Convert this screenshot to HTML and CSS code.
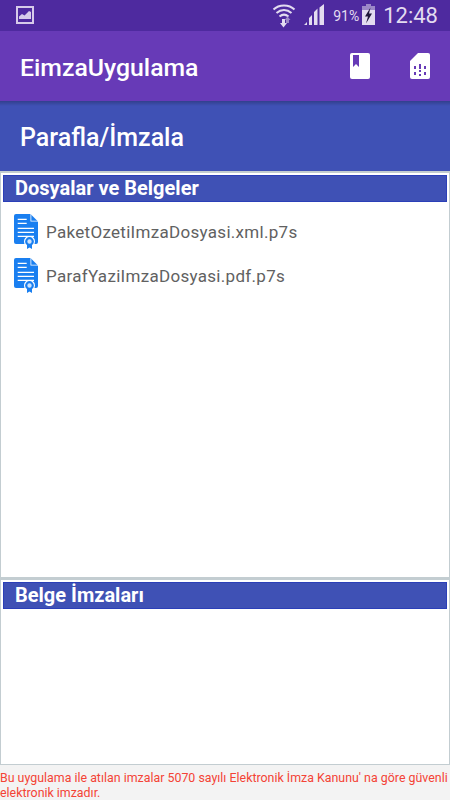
FILE: index.html
```html
<!DOCTYPE html>
<html lang="tr">
<head>
<meta charset="utf-8">
<title>EimzaUygulama</title>
<link rel="stylesheet" href="styles.css">
</head>
<body>
<div class="app">
  <div class="statusbar">
    <svg class="st-pic" width="18" height="18" viewBox="0 0 18 18"><path fill="#d6cbea" d="M0 0h18v18H0z"/><path fill="#4e2a9f" d="M2 2h14v14H2z"/><path fill="#d6cbea" d="M3 13v-2.500l3-2.500 2.500 1.500L13 5l2 1v7z"/></svg>
    <div class="st-right">
      <svg class="st-wifi" width="24" height="26" viewBox="0 0 24 26"><g fill="none" stroke="#e3dcf0" stroke-width="2"><path d="M1.500 7.500C7 2 17 2 22.500 7.500"/><path d="M4.500 11C9 7 15 7 19.500 11"/><path d="M7.500 14.500c3-2.500 6-2.500 9 0"/></g><path fill="#e3dcf0" d="M10 17h3v4h2l-3.500 4.500L8 21h2z"/><path fill="#9c88c8" d="M14 21v-3h-1.500l3-3.500 3 3.500H17v3z"/></svg>
      <svg class="st-signal" width="20" height="21" viewBox="0 0 20 21"><path fill="#e3dcf0" d="M0 21l3-3v3zM5 21v-7l3-3v10zM10 21V8l3.500-3.500V21zM15.500 21V3.500L20 0v21z"/></svg>
      <span class="st-pct">91%</span>
      <svg class="st-batt" width="13" height="21" viewBox="0 0 13 21"><path fill="#9c88c8" d="M4 0h5v2H4zM0 2h13v4H0z"/><path fill="#e3dcf0" d="M0 6h13v15H0z"/><path fill="#20183a" d="M8.500 3.500L3 12.500h3l-2 7 6-10H7z"/></svg>
      <span class="st-time">12:48</span>
    </div>
  </div>
  <div class="toolbar">
    <span class="tb-title">EimzaUygulama</span>
    <div class="tb-actions">
      <svg width="20" height="26" viewBox="0 0 20 26"><path fill="#fff" d="M2 0h16a2 2 0 0 1 2 2v22a2 2 0 0 1-2 2H2a2 2 0 0 1-2-2V2a2 2 0 0 1 2-2z"/><path fill="#673ab7" d="M3 2h6v12l-3-3-3 3z"/></svg>
      <svg width="20" height="26" viewBox="0 0 20 26"><path fill="#fff" d="M8 0h10a2 2 0 0 1 2 2v22a2 2 0 0 1-2 2H2a2 2 0 0 1-2-2V8z"/><path fill="#673ab7" d="M4 13h2v3H4zM9 13h2v3H9zM14 13h2v3h-2zM4 19h2v3H4zM9 11h2v2H9zM9 17h2v2H9zM9 21h2v2H9zM14 19h2v3h-2z"/></svg>
    </div>
  </div>
  <div class="pagehead">
    <div class="shadow"></div>
    <span class="pagehead-title">Parafla/İmzala</span>
  </div>
  <main class="content">
    <section class="panel panel-files">
      <h2 class="panel-bar">Dosyalar ve Belgeler</h2>
      <ul class="files">
        <li class="file">
          <svg class="file-icon" width="24" height="35" viewBox="0 0 24 35"><path fill="#1a7ff0" d="M2 0h14.500L24 7.500V28a2 2 0 0 1-2 2H2a2 2 0 0 1-2-2V2a2 2 0 0 1 2-2z"/><path fill="#fff" d="M16.500 0l.8 0v6.700H24v.8h-7.500zM3.700 4.800h9v1.200h-9zM3.700 8.800h9V10h-9zM3.700 13.800H20V15H3.700zM3.700 17.800H20V19H3.700zM3.700 21.800H20V23H3.700z"/><circle cx="15.500" cy="27.500" r="5.500" fill="#fff"/><circle cx="15.500" cy="27.500" r="3.300" fill="#cfe4fd" stroke="#1a7ff0" stroke-width="2.200"/><path fill="#1a7ff0" d="M13 31h5v4l-2.500-1.500L13 35z"/></svg>
          <span class="file-name">PaketOzetiImzaDosyasi.xml.p7s</span>
        </li>
        <li class="file">
          <svg class="file-icon" width="24" height="35" viewBox="0 0 24 35"><path fill="#1a7ff0" d="M2 0h14.500L24 7.500V28a2 2 0 0 1-2 2H2a2 2 0 0 1-2-2V2a2 2 0 0 1 2-2z"/><path fill="#fff" d="M16.500 0l.8 0v6.700H24v.8h-7.500zM3.700 4.800h9v1.200h-9zM3.700 8.800h9V10h-9zM3.700 13.800H20V15H3.700zM3.700 17.800H20V19H3.700zM3.700 21.800H20V23H3.700z"/><circle cx="15.500" cy="27.500" r="5.500" fill="#fff"/><circle cx="15.500" cy="27.500" r="3.300" fill="#cfe4fd" stroke="#1a7ff0" stroke-width="2.200"/><path fill="#1a7ff0" d="M13 31h5v4l-2.500-1.500L13 35z"/></svg>
          <span class="file-name">ParafYaziImzaDosyasi.pdf.p7s</span>
        </li>
      </ul>
    </section>
    <section class="panel panel-sigs">
      <h2 class="panel-bar">Belge İmzaları</h2>
    </section>
    <p class="legal">Bu uygulama ile atılan imzalar 5070 sayılı Elektronik İmza Kanunu' na göre güvenli elektronik imzadır.</p>
  </main>
</div>
</body>
</html>
```
FILE: styles.css
```css
* { box-sizing: border-box; }
html, body { margin: 0; padding: 0; }
body { width: 450px; height: 800px; overflow: hidden; font-family: Roboto, sans-serif; background: #f3f3f3; }
.app { display: flex; flex-direction: column; height: 800px; }
.statusbar { height: 31px; flex: none; background: #4e2a9f; display: flex; align-items: center; justify-content: space-between; padding: 0 12px 0 16px; }
.st-pic { margin-bottom: 2px; }
.st-right { display: flex; align-items: center; }
.st-wifi { margin-right: 8px; margin-bottom: 2px; }
.st-signal { margin-right: 9px; margin-bottom: 2px; }
.st-pct { font-size: 14px; color: #e3dcf0; margin-right: 3px; }
.st-batt { margin-right: 8px; margin-bottom: 2px; }
.st-time { font-size: 22px; color: #e3dcf0; }
.toolbar { height: 70px; flex: none; background: #673ab7; display: flex; align-items: center; justify-content: space-between; padding: 2px 20px 0 20px; }
.tb-title { color: #fff; font-size: 24.8px; font-weight: 500; }
.tb-actions { display: flex; gap: 40px; margin-bottom: 2px; }
.pagehead { position: relative; height: 70px; flex: none; background: #3f51b5; display: flex; align-items: center; padding: 2px 0 0 20px; }
.shadow { position: absolute; left: 0; right: 0; top: 0; height: 5px; background: linear-gradient(rgba(0,0,0,.22), rgba(0,0,0,0)); }
.pagehead-title { color: #fff; font-size: 25px; font-weight: 500; }
.content { flex: 1; display: flex; flex-direction: column; background: #f3f3f3; }
.panel { flex: none; background: #fff; border: 1px solid #c3cdd1; border-top-width: 2px; padding: 2px 2px 0; }
.panel-files { height: 407px; }
.panel-sigs { height: 187px; }
.panel-bar { margin: 0; height: 27px; background: #3f51b5; border: 1px solid #2b3fb8; color: #fff; font-size: 20px; font-weight: 700; line-height: 24px; padding-left: 11px; }
.files { list-style: none; margin: 12px 0 0; padding: 0 0 0 11px; display: flex; flex-direction: column; gap: 9px; }
.file { display: flex; align-items: center; height: 35px; }
.file-name { margin-left: 8px; font-size: 17px; color: #616161; letter-spacing: .3px; }
.legal { margin: 0; font-size: 12.4px; line-height: 15px; color: #f44336; padding-top: 5px; }
```
